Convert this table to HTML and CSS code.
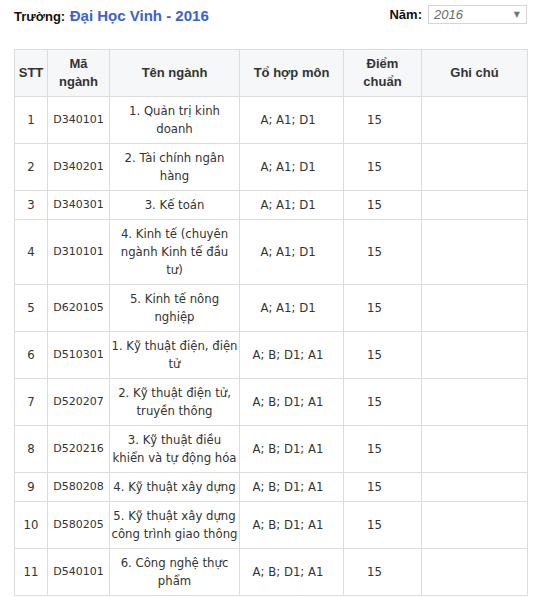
FILE: index.html
```html
<!DOCTYPE html>
<html lang="vi">
<head>
<meta charset="utf-8">
<title>Điểm chuẩn - Đại Học Vinh</title>
<link rel="stylesheet" href="styles.css">
</head>
<body>
<div class="page">
  <div class="topbar">
    <h2 class="school"><span class="label">Trường:</span> <span class="name">Đại Học Vinh - 2016</span></h2>
    <div class="year">
      <span class="label">Năm:</span>
      <div class="select"><span class="value">2016</span><span class="arrow">▼</span></div>
    </div>
  </div>
  <table class="scores">
    <colgroup>
      <col class="c-stt"><col class="c-ma"><col class="c-ten"><col class="c-to"><col class="c-diem"><col class="c-ghi">
    </colgroup>
    <thead>
      <tr><th>STT</th><th>Mã ngành</th><th>Tên ngành</th><th>Tổ hợp môn</th><th>Điểm chuẩn</th><th>Ghi chú</th></tr>
    </thead>
    <tbody>
      <tr><td>1</td><td class="ma">D340101</td><td class="ten">1. Quản trị kinh doanh</td><td class="to">A; A1; D1</td><td class="diem">15</td><td></td></tr>
      <tr><td>2</td><td class="ma">D340201</td><td class="ten">2. Tài chính ngân hàng</td><td class="to">A; A1; D1</td><td class="diem">15</td><td></td></tr>
      <tr><td>3</td><td class="ma">D340301</td><td class="ten">3. Kế toán</td><td class="to">A; A1; D1</td><td class="diem">15</td><td></td></tr>
      <tr><td>4</td><td class="ma">D310101</td><td class="ten">4. Kinh tế (chuyên ngành Kinh tế đầu tư)</td><td class="to">A; A1; D1</td><td class="diem">15</td><td></td></tr>
      <tr><td>5</td><td class="ma">D620105</td><td class="ten">5. Kinh tế nông nghiệp</td><td class="to">A; A1; D1</td><td class="diem">15</td><td></td></tr>
      <tr><td>6</td><td class="ma">D510301</td><td class="ten">1. Kỹ thuật điện, điện tử</td><td class="to">A; B; D1; A1</td><td class="diem">15</td><td></td></tr>
      <tr><td>7</td><td class="ma">D520207</td><td class="ten">2. Kỹ thuật điện tử, truyền thông</td><td class="to">A; B; D1; A1</td><td class="diem">15</td><td></td></tr>
      <tr><td>8</td><td class="ma">D520216</td><td class="ten">3. Kỹ thuật điều khiển và tự động hóa</td><td class="to">A; B; D1; A1</td><td class="diem">15</td><td></td></tr>
      <tr><td>9</td><td class="ma">D580208</td><td class="ten">4. Kỹ thuật xây dựng</td><td class="to">A; B; D1; A1</td><td class="diem">15</td><td></td></tr>
      <tr><td>10</td><td class="ma">D580205</td><td class="ten">5. Kỹ thuật xây dựng công trình giao thông</td><td class="to">A; B; D1; A1</td><td class="diem">15</td><td></td></tr>
      <tr><td>11</td><td class="ma">D540101</td><td class="ten">6. Công nghệ thực phẩm</td><td class="to">A; B; D1; A1</td><td class="diem">15</td><td></td></tr>
    </tbody>
  </table>
</div>
</body>
</html>
```
FILE: styles.css
```css
html, body {
  margin: 0;
  padding: 0;
  background: #fff;
}
.page {
  padding: 0 6px 0 14px;
  font-family: "DejaVu Sans", Verdana, sans-serif;
  font-size: 11.7px;
  color: #333;
}
.topbar {
  display: flex;
  justify-content: space-between;
  align-items: flex-start;
  height: 49px;
}
.school {
  margin: 7px 0 0;
  font-family: "Liberation Sans", Arial, sans-serif;
  font-weight: bold;
  font-size: 13px;
  line-height: 18px;
  color: #111;
}
.school .name {
  font-size: 15px;
  color: #3a62d0;
  margin-left: 1px;
}
.year {
  display: flex;
  align-items: center;
  gap: 6px;
  margin-top: 5px;
}
.year .label {
  font-family: "Liberation Sans", Arial, sans-serif;
  font-weight: bold;
  font-size: 13px;
  color: #111;
}
.select {
  height: 17px;
  border: 1px solid #d4d4d4;
  display: flex;
  align-items: center;
  justify-content: space-between;
  padding: 0 6px 0 5px;
  box-sizing: content-box;
  width: 86px;
}
.select .value {
  font-family: "Liberation Sans", Arial, sans-serif;
  font-style: italic;
  font-size: 13px;
  color: #6b6b6b;
}
.select .arrow {
  font-size: 8px;
  color: #777;
}
.scores {
  width: 514px;
  border-collapse: collapse;
  table-layout: fixed;
}
.c-stt { width: 33px; }
.c-ma { width: 62px; }
.c-ten { width: 130px; }
.c-to { width: 104px; }
.c-diem { width: 78px; }
.c-ghi { width: 106px; }
.scores th,
.scores td {
  border: 1px solid #dcdcdc;
  padding: 5px 2px;
  line-height: 18px;
  text-align: center;
  vertical-align: middle;
}
.scores th {
  background: #f6f7f9;
  font-family: "Liberation Sans", Arial, sans-serif;
  font-weight: bold;
  font-size: 13px;
  color: #333;
}
.scores td.ma { font-size: 11px; }
.scores td.ten { padding-left: 1px; padding-right: 1px; }
.scores td.to { padding-right: 9px; }
.scores td.diem { padding-right: 18px; }
```
